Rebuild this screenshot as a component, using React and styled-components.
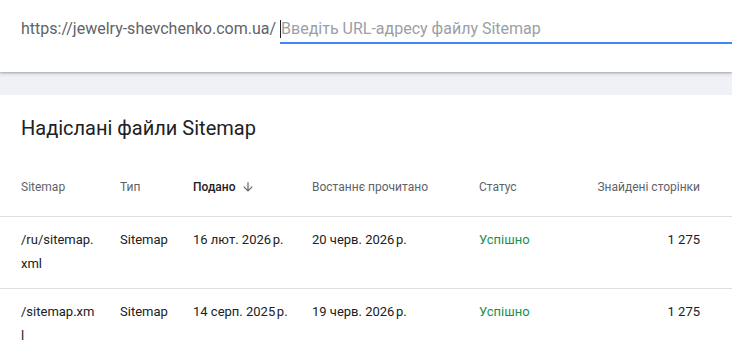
import React from 'react';
import styled, { createGlobalStyle } from 'styled-components';

const GlobalStyle = createGlobalStyle`
    body {
        margin: 0;
        background: #eff1f6;
        font-family: Roboto, 'Liberation Sans', sans-serif;
        color: #202124;
    }
`;

const Page = styled.div`
    width: 732px;
    height: 359px;
    overflow: hidden;
    display: flex;
    flex-direction: column;
    gap: 23px;
`;

// 상단 URL 입력 영역
const TopPanel = styled.div`
    height: 72px;
    flex-shrink: 0;
    box-sizing: border-box;
    padding: 18px 0 0 21px;
    background: #fff;
    display: flex;
    align-items: flex-start;
    position: relative;
    z-index: 1;
    box-shadow: 0 1px 2px rgba(60, 64, 67, 0.35), 0 2px 4px rgba(60, 64, 67, 0.12);
`;

const Prefix = styled.div`
    font-size: 16px;
    line-height: 22px;
    color: #5f6368;
    margin-right: 4px;
    white-space: nowrap;
`;

const Field = styled.div`
    flex: 1;
    display: flex;
    align-items: center;
    height: 22px;
    padding-bottom: 2px;
    border-bottom: 2px solid #4285f4;
`;

const Caret = styled.span`
    width: 1px;
    height: 18px;
    background: #202124;
`;

const Placeholder = styled.span`
    font-size: 16px;
    line-height: 22px;
    color: #9aa0a6;
    white-space: nowrap;
`;

const Card = styled.div`
    flex: 1;
    background: #fff;
    padding-top: 19px;
`;

const Title = styled.h2`
    margin: 0 0 16px 21px;
    font-size: 20px;
    line-height: 28px;
    font-weight: 400;
    color: #202124;
`;

const Table = styled.div`
    display: grid;
    grid-template-columns: 120px 73px 119px 167px 1fr auto;
`;

const HeadCell = styled.div`
    padding: 21px 24px 21px 0;
    font-size: 12px;
    line-height: 16px;
    font-weight: ${({ active }) => (active ? 500 : 400)};
    color: ${({ active }) => (active ? '#202124' : '#5f6368')};
    border-bottom: 1px solid #e0e0e0;
    display: flex;
    align-items: center;
    justify-content: ${({ right }) => (right ? 'flex-end' : 'flex-start')};
    gap: 6px;
    white-space: nowrap;
    &:nth-child(6n + 1) {
        padding-left: 21px;
    }
    &:nth-child(6n) {
        padding-right: 32px;
    }
`;

const Cell = styled.div`
    padding: 11px 24px 12px 0;
    font-size: 13px;
    line-height: 24px;
    color: ${({ ok }) => (ok ? '#1a8f50' : '#202124')};
    text-align: ${({ right }) => (right ? 'right' : 'left')};
    border-bottom: ${({ last }) => (last ? 'none' : '1px solid #e0e0e0')};
    word-break: ${({ wrap }) => (wrap ? 'break-all' : 'normal')};
    white-space: ${({ wrap }) => (wrap ? 'normal' : 'nowrap')};
    &:nth-child(6n + 1) {
        padding-left: 21px;
    }
    &:nth-child(6n) {
        padding-right: 32px;
    }
`;

const SortIcon = () => (
    <svg width="14" height="14" viewBox="0 0 24 24" fill="#5f6368">
        <path d="M20 12l-1.41-1.41L13 16.17V4h-2v12.17l-5.58-5.59L4 12l8 8 8-8z" />
    </svg>
);

const rows = [
    { path: '/ru/sitemap.xml', type: 'Sitemap', sent: '16 лют. 2026\u202Fр.', read: '20 черв. 2026\u202Fр.', status: 'Успішно', pages: '1\u00A0275' },
    { path: '/sitemap.xml', type: 'Sitemap', sent: '14 серп. 2025\u202Fр.', read: '19 черв. 2026\u202Fр.', status: 'Успішно', pages: '1\u00A0275' },
];

function App() {
    return (
        <Page>
            <GlobalStyle />
            <TopPanel>
                <Prefix>https://jewelry-shevchenko.com.ua/</Prefix>
                <Field>
                    <Caret />
                    <Placeholder>Введіть URL-адресу файлу Sitemap</Placeholder>
                </Field>
            </TopPanel>
            <Card>
                <Title>Надіслані файли Sitemap</Title>
                <Table>
                    <HeadCell>Sitemap</HeadCell>
                    <HeadCell>Тип</HeadCell>
                    <HeadCell active>
                        Подано
                        <SortIcon />
                    </HeadCell>
                    <HeadCell>Востаннє прочитано</HeadCell>
                    <HeadCell>Статус</HeadCell>
                    <HeadCell right>Знайдені сторінки</HeadCell>
                    {rows.map((r, i) => {
                        const last = i === rows.length - 1;
                        return (
                            <React.Fragment key={r.path}>
                                <Cell wrap last={last}>{r.path}</Cell>
                                <Cell last={last}>{r.type}</Cell>
                                <Cell last={last}>{r.sent}</Cell>
                                <Cell last={last}>{r.read}</Cell>
                                <Cell ok last={last}>{r.status}</Cell>
                                <Cell right last={last}>{r.pages}</Cell>
                            </React.Fragment>
                        );
                    })}
                </Table>
            </Card>
        </Page>
    );
}

export default App;
